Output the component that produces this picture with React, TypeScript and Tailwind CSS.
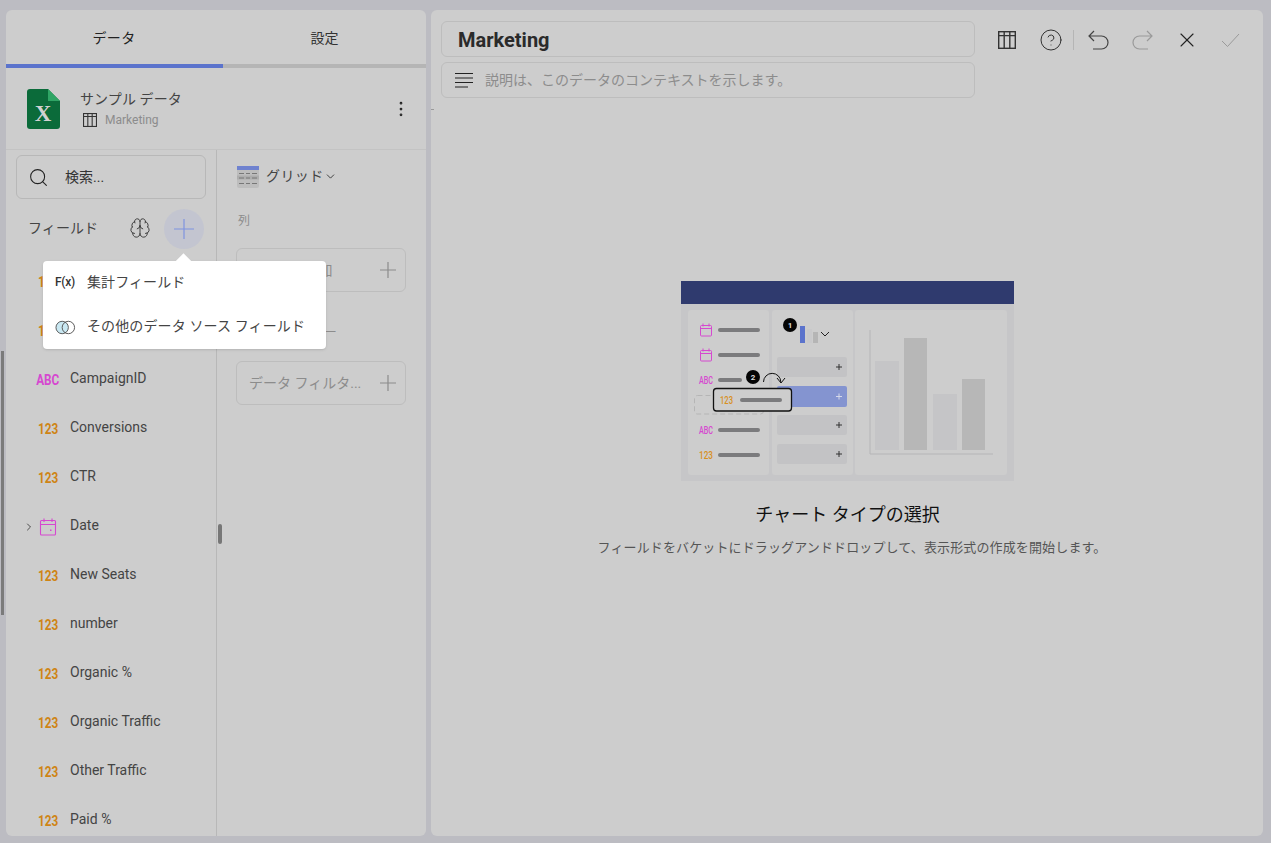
import { Brain, ChevronDown, ChevronRight, CircleHelp, EllipsisVertical, Search, X } from "lucide-react";

const fields = [
  { name: "Actual Spend", type: "123" },
  { name: "Budget", type: "123" },
  { name: "CampaignID", type: "ABC" },
  { name: "Conversions", type: "123" },
  { name: "CTR", type: "123" },
  { name: "Date", type: "date" },
  { name: "New Seats", type: "123" },
  { name: "number", type: "123" },
  { name: "Organic %", type: "123" },
  { name: "Organic Traffic", type: "123" },
  { name: "Other Traffic", type: "123" },
  { name: "Paid %", type: "123" },
];

function PlusMark({ size, color }: { size: number; color: string }) {
  const mid = size / 2;
  return (
    <svg width={size} height={size} viewBox={`0 0 ${size} ${size}`} stroke={color} strokeWidth="1.2">
      <path d={`M0 ${mid}H${size}M${mid} 0V${size}`} />
    </svg>
  );
}

function CalendarIcon() {
  return (
    <svg width="18" height="18" viewBox="0 0 18 18" fill="none" stroke="#d648d0" strokeWidth="1.1">
      <rect x="1.5" y="2.5" width="15" height="14.5" rx="1" />
      <path d="M1.5 6.5H16.5M5 0.5V4M13 0.5V4" />
      <rect x="11" y="11.5" width="1.5" height="1.5" fill="#d648d0" stroke="none" />
    </svg>
  );
}

function TableIcon({ size }: { size: number }) {
  return (
    <svg width={size} height={size} viewBox="0 0 18 18" fill="none" stroke="#333" strokeWidth="1.4">
      <rect x="0.7" y="0.7" width="16.6" height="16.6" />
      <path d="M0.7 4.6H17.3M6.2 0.7V17.3M11.8 0.7V17.3" />
    </svg>
  );
}

function ExcelIcon() {
  return (
    <svg width="33" height="40" viewBox="0 0 33 40">
      <path d="M3 0H21L33 12V37a3 3 0 0 1-3 3H3a3 3 0 0 1-3-3V3a3 3 0 0 1 3-3Z" fill="#0b6b3a" />
      <path d="M21 0L33 12H21Z" fill="#2fa565" />
      <text x="16" y="32" textAnchor="middle" fontSize="23" fontWeight="700" fontFamily="Liberation Serif" fill="#d2d2d2">X</text>
    </svg>
  );
}

function GridIcon() {
  return (
    <svg width="22" height="22" viewBox="0 0 22 22">
      <rect x="0" y="0" width="22" height="22" rx="2" fill="#bdbdbd" />
      <rect x="0" y="0" width="22" height="4" fill="#6f82cf" />
      <rect x="0" y="9.5" width="22" height="4" fill="#adadad" />
      <path d="M2 7.5H7M9 7.5H13M15 7.5H20M2 12H7M9 12H13M15 12H20M2 17.5H7M9 17.5H13M15 17.5H20" stroke="#777" strokeWidth="1" />
    </svg>
  );
}

function TypeIcon({ type }: { type: string }) {
  if (type === "date") return <CalendarIcon />;
  return (
    <span className={`translate-y-[1px] scale-x-[0.84] text-[14px] font-bold ${type === "ABC" ? "text-[#d648d0]" : "text-[#cf8414]"}`}>
      {type}
    </span>
  );
}

function DropBox({ label }: { label: string }) {
  return (
    <div className="flex h-[44px] w-[170px] items-center justify-between rounded-[6px] border border-[#bdbdbd] pl-[12px] pr-[9px]">
      <span className="text-[14px] text-[#8c8c8c]">{label}</span>
      <PlusMark size={16} color="#8c8c8c" />
    </div>
  );
}

function Illustration() {
  const rowBars = [330, 355, 430, 455];
  const midRows = [357, 415, 444];
  return (
    <svg width="333" height="200" viewBox="681 281 333 200" fontFamily="Roboto">
      <rect x="681" y="304" width="333" height="177" fill="#c6c6c8" />
      <rect x="681" y="281" width="333" height="23" fill="#2f3a6e" />
      <rect x="688" y="310" width="81" height="165" rx="3" fill="#cdcdcd" />
      <rect x="772" y="310" width="81" height="165" rx="3" fill="#cdcdcd" />
      <rect x="855" y="310" width="152" height="165" rx="3" fill="#cdcdcd" />

      {[325, 350].map((y) => (
        <g key={y} fill="none" stroke="#d648d0" strokeWidth="1">
          <rect x="700.5" y={y + 0.5} width="11" height="10.5" rx="1" />
          <path d={`M700.5 ${y + 3.5}H711.5M703 ${y - 1.5}V${y + 1.5}M709 ${y - 1.5}V${y + 1.5}`} />
        </g>
      ))}
      {rowBars.map((y) => (
        <rect key={y} x="718" y={y - 2} width="42" height="4" rx="2" fill="#7b7b7d" />
      ))}
      <rect x="718" y="378" width="24" height="4" rx="2" fill="#7b7b7d" />
      <text x="699" y="384" fontSize="10" fontWeight="500" textLength="14" lengthAdjust="spacingAndGlyphs" fill="#d648d0">ABC</text>
      <text x="699" y="434" fontSize="10" fontWeight="500" textLength="14" lengthAdjust="spacingAndGlyphs" fill="#d648d0">ABC</text>
      <text x="699" y="459" fontSize="11" fontWeight="500" textLength="14" lengthAdjust="spacingAndGlyphs" fill="#d8901f">123</text>

      {midRows.map((y) => (
        <g key={y}>
          <rect x="777" y={y} width="70" height="20" rx="2" fill="#c3c3c5" />
          <path d={`M836 ${y + 10}H842M839 ${y + 7}V${y + 13}`} stroke="#333" strokeWidth="1" />
        </g>
      ))}
      <rect x="777" y="386" width="70" height="21" rx="2" fill="#8494d0" />
      <path d="M836 396.5H842M839 393.5V399.5" stroke="#d5d9ea" strokeWidth="1" />

      <rect x="694.5" y="395.5" width="69" height="18.5" rx="3" fill="none" stroke="#b5b5b5" strokeWidth="1" strokeDasharray="5 3" />
      <rect x="713.5" y="388.5" width="78" height="22.5" rx="3" fill="#cdcdcd" stroke="#111" strokeWidth="1.3" />
      <text x="720" y="404" fontSize="11" fontWeight="500" textLength="13" lengthAdjust="spacingAndGlyphs" fill="#d8901f">123</text>
      <rect x="740" y="398" width="42" height="4" rx="2" fill="#7b7b7d" />

      <rect x="800" y="326" width="5" height="17" fill="#5b73cc" />
      <rect x="807" y="329" width="5" height="14" fill="#c9c9cb" />
      <rect x="813" y="332" width="5" height="11" fill="#b5b5b5" />
      <path d="M821 332L825 336L829 332" fill="none" stroke="#222" strokeWidth="1" />
      <circle cx="790" cy="325" r="7" fill="#050505" />
      <text x="790" y="328" textAnchor="middle" fontSize="8" fontWeight="700" fill="#ddd">1</text>
      <circle cx="753" cy="377" r="7" fill="#050505" />
      <text x="753" y="380" textAnchor="middle" fontSize="8" fontWeight="700" fill="#ddd">2</text>
      <path d="M763.5 382A8.5 8.5 0 0 1 780.8 382M777 378L781 383L785 378" fill="none" stroke="#111" strokeWidth="1" />

      <path d="M870 330V454H993" fill="none" stroke="#b5b5b7" strokeWidth="1" />
      <rect x="875" y="361" width="24" height="89" fill="#c5c5c7" />
      <rect x="904" y="338" width="23" height="112" fill="#b7b7b7" />
      <rect x="933" y="394" width="24" height="56" fill="#c5c5c7" />
      <rect x="962" y="379" width="23" height="71" fill="#b7b7b7" />
    </svg>
  );
}

export default function App() {
  return (
    <div className="relative flex h-screen w-full gap-[5px] overflow-hidden bg-[#bcbcc2] pb-[7px] pl-[6px] pr-[8px] pt-[10px] font-['Roboto','Noto_Sans_CJK_JP',sans-serif] text-[#333]">
      <div className="absolute left-[1px] top-[351px] h-[264px] w-[3px] bg-[#7b7b7b]" />

      {/* left panel */}
      <div className="relative flex w-[420px] flex-col overflow-hidden rounded-[6px] bg-[#cdcdcd]">
        <div className="flex h-[58px] shrink-0">
          <div className="flex w-[217px] items-center justify-center border-b-4 border-[#5b73cc] pr-[1px] pt-[3px] text-[14px] tracking-[0.3px] text-[#222]">データ</div>
          <div className="flex flex-1 items-center justify-center border-b-4 border-[#b5b5b5] pt-[3px] text-[14px] text-[#333]">設定</div>
        </div>

        <div className="flex h-[82px] shrink-0 items-center border-b border-[#c3c3c3] pl-[21px] pr-[15px]">
          <ExcelIcon />
          <div className="ml-[20px] flex flex-1 flex-col">
            <span className="text-[14px] leading-[20px] tracking-[0.1px] text-[#444]">サンプル データ</span>
            <span className="mt-[3px] flex items-center gap-[8px] pl-[3px] text-[12px] leading-[16px] text-[#8c8c8c]">
              <TableIcon size={14} />
              Marketing
            </span>
          </div>
          <EllipsisVertical size={20} strokeWidth={1.3} className="text-[#222]" />
        </div>

        <div className="flex min-h-0 flex-1">
          <div className="flex w-[211px] shrink-0 flex-col overflow-hidden border-r border-[#b8b8b8]">
            <div className="mx-[10px] mt-[5px] flex h-[44px] shrink-0 items-center rounded-[6px] border border-[#b8b8b8] pl-[11px]">
              <Search size={21} strokeWidth={1.2} className="text-[#222]" />
              <span className="ml-[16px] text-[14px] text-[#333]">検索...</span>
            </div>
            <div className="flex h-[58px] shrink-0 items-center pl-[22px]">
              <span className="text-[14px] tracking-[0.1px] text-[#444]">フィールド</span>
              <Brain size={22} strokeWidth={1} className="ml-[31px] text-[#333]" />
              <div className="ml-[13px] mt-[2px] flex size-[40px] items-center justify-center rounded-full bg-[#c3c5d0]">
                <PlusMark size={20} color="#7f93e0" />
              </div>
            </div>
            {fields.map((f) => (
              <div key={f.name} className="flex h-[49px] shrink-0 items-center pl-[16px]">
                <span className="flex w-[14px] justify-center">
                  {f.type === "date" && <ChevronRight size={12} strokeWidth={1.5} className="text-[#222]" />}
                </span>
                <span className="flex w-[24px] justify-center">
                  <TypeIcon type={f.type} />
                </span>
                <span className="ml-[10px] -translate-y-[1px] text-[14px] text-[#444]">{f.name}</span>
              </div>
            ))}
          </div>

          <div className="relative flex-1 px-[19px]">
            <div className="absolute left-[1px] top-[374px] h-[20px] w-[4px] rounded-full bg-[#777]" />
            <div className="flex h-[52px] items-center pl-[1px] pt-[1px]">
              <GridIcon />
              <span className="ml-[7px] text-[14px] tracking-[0.4px] text-[#444]">グリッド</span>
              <ChevronDown size={13} strokeWidth={1.5} className="text-[#222]" />
            </div>
            <div className="mb-[19px] mt-[11px] pl-[2px] text-[12px] leading-[16px] text-[#8c8c8c]">列</div>
            <DropBox label="カラムを追加" />
            <div className="mb-[20px] mt-[33px] pl-[2px] text-[12px] leading-[16px] text-[#8c8c8c]">データ フィルター</div>
            <DropBox label="データ フィルタ..." />
          </div>
        </div>

        {/* add field menu */}
        <div className="absolute left-[37px] top-[251px] w-[283px] rounded-[4px] bg-white px-[12px] shadow-sm">
          <div className="absolute left-[134px] top-[-5px] size-[13px] rotate-45 bg-white" />
          <div className="relative flex h-[44px] items-center pb-[2px]">
            <span className="w-[32px] text-[12px] font-medium tracking-[-0.3px] text-[#333]">F(x)</span>
            <span className="text-[14px] tracking-[0.1px] text-[#444]">集計フィールド</span>
          </div>
          <div className="relative flex h-[44px] items-center pb-[2px]">
            <svg width="21" height="15" viewBox="0 0 22 15" className="mr-[11px] mt-[2px]" fill="none" stroke="#555" strokeWidth="1">
              <circle cx="7.5" cy="7.5" r="6.5" fill="#c9e8f2" />
              <circle cx="14" cy="7.5" r="6.5" />
            </svg>
            <span className="text-[14px] tracking-[0.12px] text-[#444]">その他のデータ ソース フィールド</span>
          </div>
        </div>
      </div>

      {/* right panel */}
      <div className="relative flex flex-1 flex-col rounded-[6px] bg-[#cdcdcd]">
        <div className="absolute left-0 top-[99px] h-px w-[3px] bg-[#999]" />
        <div className="flex items-start pl-[10px] pt-[11px]">
          <div className="flex w-[534px] flex-col gap-[5px]">
            <div className="flex h-[36px] items-center rounded-[6px] border border-[#bdbdbd] pl-[16px] pt-[2px] text-[20px] font-bold text-[#2a2a2a]">Marketing</div>
            <div className="flex h-[36px] items-center rounded-[6px] border border-[#bdbdbd] pl-[12px] text-[14px] text-[#8c8c8c]">
              <svg width="20" height="16" viewBox="0 0 20 16" stroke="#222" strokeWidth="1.2" className="mr-[11px]">
                <path d="M1 1.5H19M1 6H19M1 10.5H19M1 15H14" />
              </svg>
              説明は、このデータのコンテキストを示します。
            </div>
          </div>
          <div className="flex h-[36px] items-center pl-[23px] pt-[1px]">
            <TableIcon size={18} />
            <CircleHelp size={24} strokeWidth={1} className="ml-[23px] text-[#333]" />
            <div className="ml-[10px] h-[20px] w-px bg-[#b5b5b5]" />
            <svg width="24" height="24" viewBox="0 0 24 24" fill="none" stroke="#444" strokeWidth="1.2" className="ml-[12px]">
              <path d="M8 3L3 8L8 13M3 8H15.5A6.5 6.5 0 0 1 15.5 21H7" />
            </svg>
            <svg width="24" height="24" viewBox="0 0 24 24" fill="none" stroke="#9a9a9a" strokeWidth="1.2" className="ml-[21px]">
              <path d="M16 3L21 8L16 13M21 8H8.5A6.5 6.5 0 0 0 8.5 21H17" />
            </svg>
            <X size={24} strokeWidth={1.1} className="ml-[20px] text-[#222]" />
            <svg width="22" height="18" viewBox="0 0 22 18" fill="none" stroke="#9a9a9a" strokeWidth="1" className="ml-[21px]">
              <path d="M2 10L7.5 15.5L19 3" />
            </svg>
          </div>
        </div>
        <div className="flex flex-col items-center pl-[1px] pt-[183px]">
          <Illustration />
          <div className="mt-[21px] text-[18px] leading-[26px] text-[#111]">チャート タイプの選択</div>
          <div className="ml-[9px] mt-[11px] text-[13px] leading-[18px] tracking-[0.13px] text-[#555]">
            フィールドをバケットにドラッグアンドドロップして、表示形式の作成を開始します。
          </div>
        </div>
      </div>
    </div>
  );
}
